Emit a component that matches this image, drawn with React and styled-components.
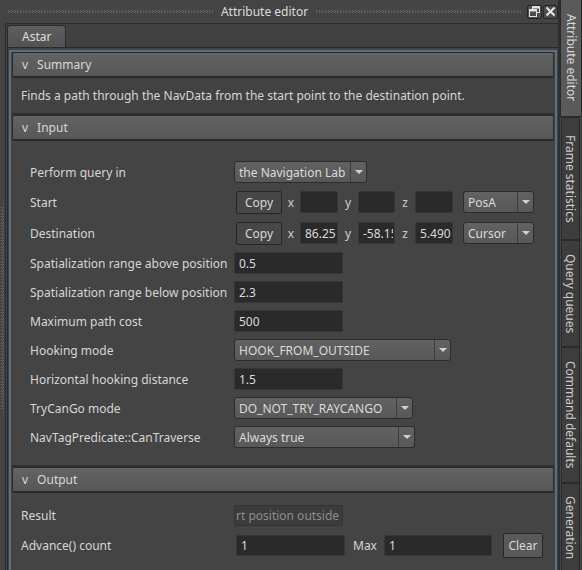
import React from 'react';
import styled, { createGlobalStyle } from 'styled-components';

const Global = createGlobalStyle`
  html, body { margin: 0; padding: 0; background: #444444; }
  body {
    font-family: "Noto Sans", "Open Sans", "DejaVu Sans", sans-serif;
    font-size: 12px;
    color: #d6d6d6;
  }
  * { box-sizing: border-box; }
`;

const Window = styled.div`
  width: 582px;
  height: 570px;
  display: flex;
  overflow: hidden;
  background: #444444;
`;

const MainColumn = styled.div`
  width: 558px;
  display: flex;
  flex-direction: column;
  min-width: 0;
`;

const TitleBar = styled.div`
  height: 23px;
  display: flex;
  align-items: center;
  padding-left: 8px;
`;

const TitleGrip = styled.div`
  flex: 1;
  height: 4px;
  margin-top: 1px;
  background-image:
    repeating-linear-gradient(90deg, #6c6c6c 0 1px, transparent 1px 3px),
    repeating-linear-gradient(90deg, transparent 0 1px, #6c6c6c 1px 2px, transparent 2px 3px),
    repeating-linear-gradient(90deg, #6c6c6c 0 1px, transparent 1px 3px);
  background-size: 100% 1px, 100% 1px, 100% 1px;
  background-position: 0 0, 0 1px, 0 2px;
  background-repeat: no-repeat;
`;

const Title = styled.span`
  color: #dcdcdc;
  margin: 0 8px;
  white-space: nowrap;
`;

const TitleButtons = styled.div`
  display: flex;
  gap: 1px;
  margin-left: 6px;
`;

const TitleButton = styled.div`
  width: 15px;
  height: 14px;
  border: 1px solid #262626;
  border-radius: 2px;
  background: #4c4c4c;
  display: flex;
  align-items: center;
  justify-content: center;
`;

const Body = styled.div`
  flex: 1;
  display: flex;
  min-height: 0;
`;

const LeftGutter = styled.div`
  width: 5px;
  padding-top: 184px;
`;

const GutterGrip = styled.div`
  width: 3px;
  height: 202px;
  margin-left: 1px;
  background-image:
    repeating-linear-gradient(180deg, #686868 0 1px, transparent 1px 3px),
    repeating-linear-gradient(180deg, transparent 0 1px, #686868 1px 2px, transparent 2px 3px),
    repeating-linear-gradient(180deg, #686868 0 1px, transparent 1px 3px);
  background-size: 1px 100%, 1px 100%, 1px 100%;
  background-position: 0 0, 1px 0, 2px 0;
  background-repeat: no-repeat;
`;

const DockFrame = styled.div`
  flex: 1;
  display: flex;
  flex-direction: column;
  min-width: 0;
  border-top: 1px solid #2c2c2c;
  border-left: 1px solid #2c2c2c;
  border-top-left-radius: 3px;
  padding-left: 1px;
`;

const TabBar = styled.div`
  height: 23px;
  display: flex;
  align-items: flex-end;
  background: #414141;
`;

const Tab = styled.div`
  width: 59px;
  height: 22px;
  border: 1px solid #2a2a2a;
  border-bottom: none;
  border-radius: 3px 3px 0 0;
  background: linear-gradient(#5e5e5e, #525252);
  color: #dcdcdc;
  padding-left: 14px;
  display: flex;
  align-items: center;
`;

const Pane = styled.div`
  flex: 1;
  display: flex;
  min-height: 0;
  border-top: 1px solid #2a2a2a;
  border-left: 1px solid #2a2a2a;
  padding: 2px 1px 0 1px;
`;

const ScrollArea = styled.div`
  flex: 1;
  min-width: 0;
  border: 2px solid #5b6f84;
  border-bottom: none;
  overflow: hidden;
  background: #444444;
`;

const SectionHeader = styled.div`
  height: 26px;
  margin: 0 1px;
  border: 1px solid #2b2b2b;
  border-bottom: 2px solid #2b2b2b;
  border-radius: 2px;
  background: linear-gradient(#636363, #575757);
  display: flex;
  align-items: center;
  padding-left: 9px;
  color: #d8d8d8;
`;

const Chevron = styled.span`
  margin-right: 9px;
`;

const SectionBody = styled.div`
  margin: 0 1px;
  border-bottom: 2px solid #303030;
`;

const Description = styled(SectionBody)`
  height: 37px;
  display: flex;
  align-items: center;
  padding-left: 9px;
  background: #424242;
  white-space: nowrap;
`;

const FormGrid = styled(SectionBody)`
  display: grid;
  grid-template-columns: 204px auto;
  row-gap: 7px;
  align-items: center;
  padding: 20px 0 17px 18px;
`;

const OutputGrid = styled.div`
  margin: 0 1px;
  display: grid;
  grid-template-columns: 213px auto;
  row-gap: 7px;
  align-items: center;
  padding: 12px 0 0 9px;
`;

const Label = styled.span`
  white-space: nowrap;
  color: #d6d6d6;
`;

const Field = styled.div`
  display: flex;
  align-items: center;
  min-height: ${p => p.$h || 22}px;
`;

const LineEdit = styled.input`
  width: ${p => p.$w}px;
  height: ${p => p.$h || 22}px;
  margin-left: ${p => p.$ml || 0}px;
  background: #2a2a2a;
  border: 1px solid #363636;
  border-radius: 2px;
  color: #dadada;
  padding: 0 1px 0 4px;
  font: inherit;
  outline: none;
`;

const DisabledField = styled.div`
  width: 109px;
  height: 21px;
  background: #3c3c3c;
  border: 1px solid #343434;
  border-radius: 2px;
  color: #8d8d8d;
  padding-left: 1px;
  display: flex;
  align-items: center;
  white-space: nowrap;
  overflow: hidden;
`;

const Button = styled.div`
  width: ${p => p.$w}px;
  height: ${p => p.$h}px;
  margin-left: ${p => p.$ml || 0}px;
  border: 1px solid #262626;
  border-radius: 2px;
  background: ${p => (p.$light ? '#595959' : '#474747')};
  color: #d8d8d8;
  display: flex;
  align-items: center;
  justify-content: center;
`;

const AxisLabel = styled.span`
  width: ${p => p.$w}px;
  text-align: center;
  color: #cfcfcf;
`;

const Combo = styled.div`
  width: ${p => p.$w}px;
  height: 22px;
  margin-left: ${p => p.$ml || 0}px;
  border: 1px solid #2c2c2c;
  border-radius: 3px;
  background: linear-gradient(#626262, #585858);
  display: flex;
  color: #dadada;
`;

const ComboText = styled.span`
  flex: 1;
  padding-left: 4px;
  display: flex;
  align-items: center;
  white-space: nowrap;
  overflow: hidden;
`;

const ComboArrow = styled.span`
  width: 16px;
  border-left: 1px solid #3c3c3c;
  display: flex;
  align-items: center;
  justify-content: center;
  &::after {
    content: "";
    border-left: 4px solid transparent;
    border-right: 4px solid transparent;
    border-top: 4px solid #d2d2d2;
  }
`;

const MaxLabel = styled.span`
  margin: 0 7px 0 8px;
  color: #d6d6d6;
`;

const SideSeparator = styled.div`
  width: 2px;
  background: #2e2e2e;
`;

const SideTabs = styled.div`
  width: 22px;
  display: flex;
  flex-direction: column;
`;

const SideTab = styled.div`
  height: ${p => p.$h}px;
  flex-shrink: 0;
  margin-left: ${p => (p.$active ? 0 : 1)}px;
  margin-right: ${p => (p.$active ? 0 : 2)}px;
  background: ${p => (p.$active ? '#5a5a5a' : '#3d3d3d')};
  border: 1px solid #2a2a2a;
  border-top: ${p => (p.$active ? 'none' : '1px solid #2a2a2a')};
  display: flex;
  align-items: center;
  justify-content: center;
  color: ${p => (p.$active ? '#d8d8d8' : '#cccccc')};
`;

const VerticalText = styled.span`
  writing-mode: vertical-rl;
  white-space: nowrap;
`;

function Combobox({ w, ml, children }) {
  return (
    <Combo $w={w} $ml={ml}>
      <ComboText>{children}</ComboText>
      <ComboArrow />
    </Combo>
  );
}

function VectorRow({ values, mode }) {
  return (
    <Field $h={24}>
      <Button $w={46} $h={23} $ml={2}>Copy</Button>
      <AxisLabel $w={18}>x</AxisLabel>
      <LineEdit $w={38} readOnly value={values[0]} />
      <AxisLabel $w={20}>y</AxisLabel>
      <LineEdit $w={37} readOnly value={values[1]} />
      <AxisLabel $w={20}>z</AxisLabel>
      <LineEdit $w={38} readOnly value={values[2]} />
      <Combobox w={71} ml={10}>{mode}</Combobox>
    </Field>
  );
}

const sideTabs = [
  { label: 'Attribute editor', h: 117, active: true },
  { label: 'Frame statistics', h: 123 },
  { label: 'Query queues', h: 107 },
  { label: 'Command defaults', h: 136 },
  { label: 'Generation', h: 90 },
];

export default function App() {
  return (
    <>
      <Global />
      <Window>
        <MainColumn>
          <TitleBar>
            <TitleGrip />
            <Title>Attribute editor</Title>
            <TitleGrip />
            <TitleButtons>
              <TitleButton>
                <svg width="11" height="11" viewBox="0 0 11 11">
                  <rect x="3.5" y="0.5" width="7" height="6" fill="none" stroke="#e0e0e0" />
                  <rect x="3.5" y="0.5" width="7" height="2" fill="#e0e0e0" />
                  <rect x="0.5" y="3.5" width="7" height="7" fill="#4c4c4c" stroke="#e0e0e0" />
                  <rect x="0.5" y="3.5" width="7" height="2" fill="#e0e0e0" />
                </svg>
              </TitleButton>
              <TitleButton>
                <svg width="11" height="11" viewBox="0 0 11 11">
                  <path d="M1.5 1.5 L9.5 9.5 M9.5 1.5 L1.5 9.5" stroke="#e6e6e6" strokeWidth="2" />
                </svg>
              </TitleButton>
            </TitleButtons>
          </TitleBar>
          <Body>
            <LeftGutter>
              <GutterGrip />
            </LeftGutter>
            <DockFrame>
              <TabBar>
                <Tab>Astar</Tab>
              </TabBar>
              <Pane>
                <ScrollArea>
                  <SectionHeader>
                    <Chevron>v</Chevron>Summary
                  </SectionHeader>
                  <Description>
                    Finds a path through the NavData from the start point to the destination point.
                  </Description>
                  <SectionHeader>
                    <Chevron>v</Chevron>Input
                  </SectionHeader>
                  <FormGrid>
                    <Label>Perform query in</Label>
                    <Field>
                      <Combobox w={133}>the Navigation Lab</Combobox>
                    </Field>

                    <Label>Start</Label>
                    <VectorRow values={['', '', '']} mode="PosA" />

                    <Label>Destination</Label>
                    <VectorRow values={['86.2506', '-58.1512', '5.49012']} mode="Cursor" />

                    <Label>Spatialization range above position</Label>
                    <Field>
                      <LineEdit $w={109} readOnly value="0.5" />
                    </Field>

                    <Label>Spatialization range below position</Label>
                    <Field>
                      <LineEdit $w={109} readOnly value="2.3" />
                    </Field>

                    <Label>Maximum path cost</Label>
                    <Field>
                      <LineEdit $w={109} readOnly value="500" />
                    </Field>

                    <Label>Hooking mode</Label>
                    <Field>
                      <Combobox w={217}>HOOK_FROM_OUTSIDE</Combobox>
                    </Field>

                    <Label>Horizontal hooking distance</Label>
                    <Field>
                      <LineEdit $w={109} readOnly value="1.5" />
                    </Field>

                    <Label>TryCanGo mode</Label>
                    <Field>
                      <Combobox w={179}>DO_NOT_TRY_RAYCANGO</Combobox>
                    </Field>

                    <Label>NavTagPredicate::CanTraverse</Label>
                    <Field>
                      <Combobox w={181}>Always true</Combobox>
                    </Field>
                  </FormGrid>
                  <SectionHeader>
                    <Chevron>v</Chevron>Output
                  </SectionHeader>
                  <OutputGrid>
                    <Label>Result</Label>
                    <Field $h={21}>
                      <DisabledField>rt position outside</DisabledField>
                    </Field>

                    <Label>Advance() count</Label>
                    <Field $h={25}>
                      <LineEdit $w={109} $h={21} $ml={2} readOnly value="1" />
                      <MaxLabel>Max</MaxLabel>
                      <LineEdit $w={108} $h={21} readOnly value="1" />
                      <Button $w={40} $h={25} $ml={11} $light>Clear</Button>
                    </Field>
                  </OutputGrid>
                </ScrollArea>
              </Pane>
            </DockFrame>
          </Body>
        </MainColumn>
        <SideSeparator />
        <SideTabs>
          {sideTabs.map(t => (
            <SideTab key={t.label} $h={t.h} $active={t.active}>
              <VerticalText>{t.label}</VerticalText>
            </SideTab>
          ))}
        </SideTabs>
      </Window>
    </>
  );
}
